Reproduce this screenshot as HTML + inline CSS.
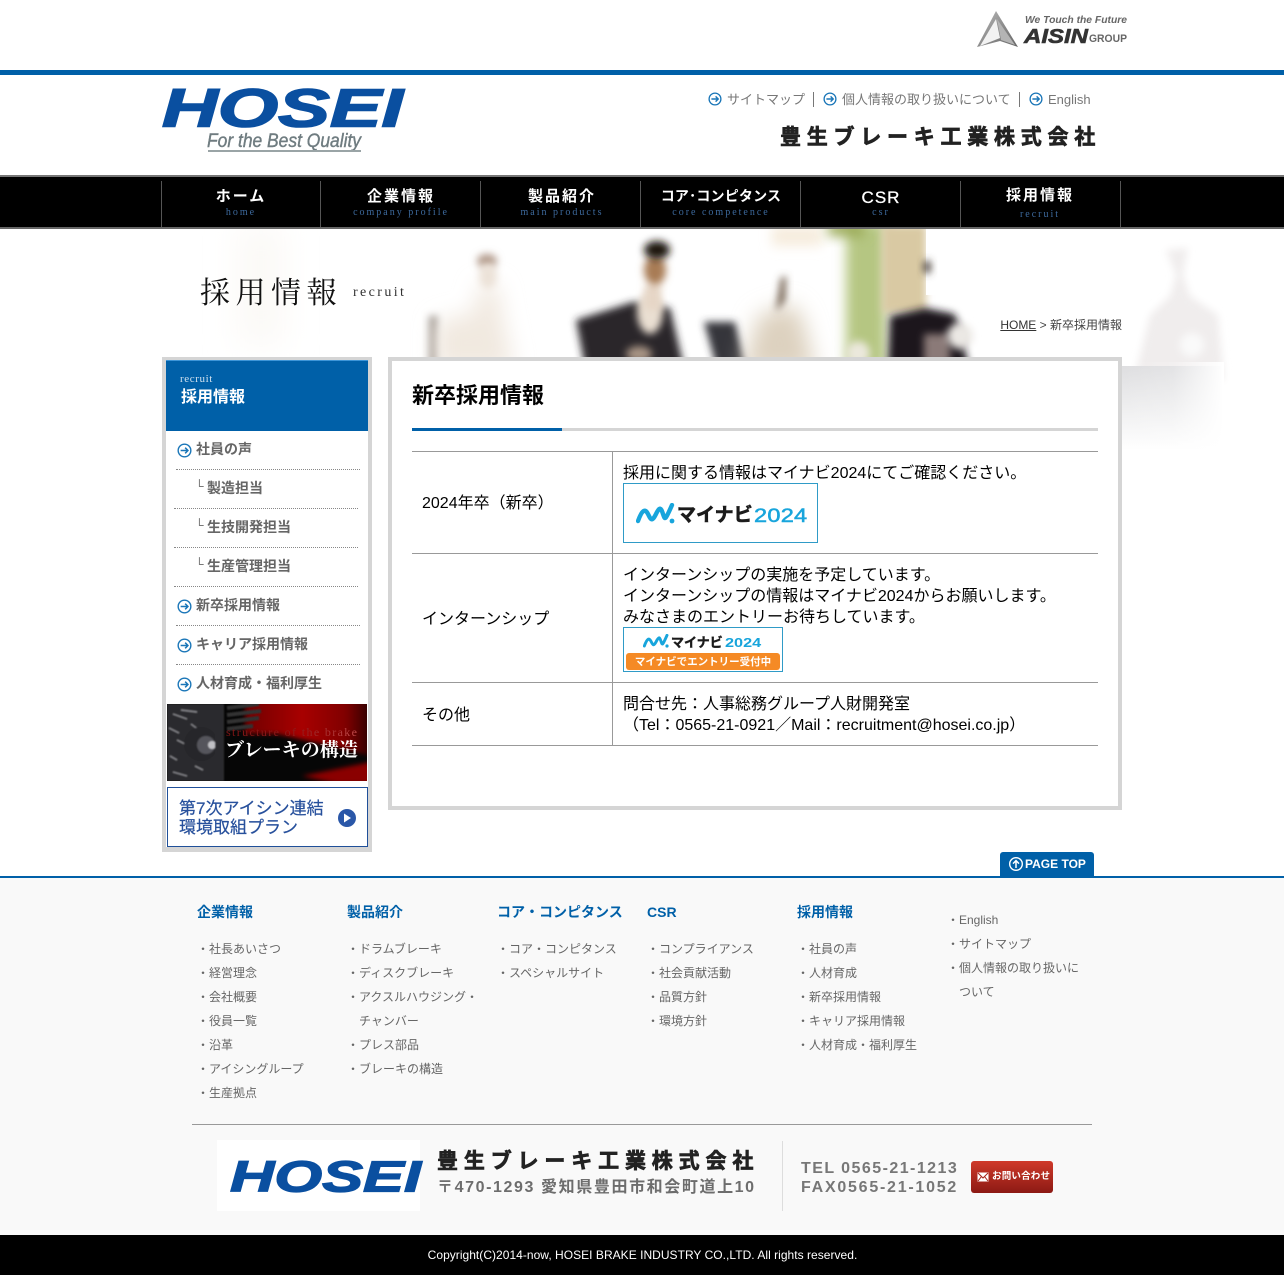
<!DOCTYPE html>
<html lang="ja"><head><meta charset="utf-8"><title>新卒採用情報</title>
<style>
html,body{margin:0;padding:0;background:#fff}
body{position:relative;width:1284px;height:1275px;overflow:hidden;font-family:"Liberation Sans","Noto Sans CJK JP",sans-serif;color:#000}
.a{position:absolute;white-space:nowrap}
svg{display:block}
.b{position:absolute}
.hl{font-size:13px;line-height:18px;color:#777}
.nm{font-size:15px;font-weight:bold;color:#fff;letter-spacing:2px;line-height:18px;text-align:center;width:160px;font-family:"Liberation Sans","Noto Sans CJK JP",sans-serif}
.ns{font-size:10px;color:#3d6a9e;letter-spacing:2px;line-height:12px;text-align:center;width:160px;font-family:"Liberation Serif",serif}
.sv{position:absolute;top:181px;width:1px;height:46px;background:#555}
.si{font-size:14px;font-weight:bold;color:#666;line-height:20px}
.dl{position:absolute;height:0;border-top:1px dotted #888}
.t{font-size:16px;line-height:21px;color:#000}
.fh{font-size:14px;font-weight:bold;color:#0060a8;line-height:18px}
.fi{font-size:12px;color:#666;line-height:24px}
.ln{position:absolute;background:#999}
</style></head><body>
<svg width="0" height="0" style="position:absolute"><defs>
<symbol id="ar" viewBox="0 0 14 14"><circle cx="7" cy="7" r="5.9" fill="#fff" stroke="#1a76b8" stroke-width="1.3"/><path d="M3.4 7H10.2M7.6 4.4 10.2 7 7.6 9.6" fill="none" stroke="#1a76b8" stroke-width="1.4"/></symbol>
<symbol id="zz" viewBox="0 0 39 21"><path d="M2 18C6 7 9 5 12 11S16 19 20 11 25 5 27 11 29 18 36 2" fill="none" stroke="#18a5dc" stroke-width="4.4" stroke-linecap="round" stroke-linejoin="round"/><circle cx="36" cy="18" r="2.4" fill="#18a5dc"/></symbol>
</defs></svg>

<!-- hero image -->
<svg class="b" style="left:0;top:229px" width="1284" height="235" viewBox="0 229 1284 235">
<defs>
<filter id="f2" x="-80%" y="-80%" width="260%" height="260%"><feGaussianBlur stdDeviation="4"/></filter>
<filter id="f3" x="-80%" y="-80%" width="260%" height="260%"><feGaussianBlur stdDeviation="6"/></filter>
<filter id="f6" x="-80%" y="-80%" width="260%" height="260%"><feGaussianBlur stdDeviation="11"/></filter>
<filter id="f14" x="-80%" y="-80%" width="260%" height="260%"><feGaussianBlur stdDeviation="16"/></filter>
<clipPath id="cl"><rect x="0" y="229" width="1284" height="128"/></clipPath>
<linearGradient id="shade" x1="0" y1="0" x2="0" y2="1"><stop offset="0" stop-color="#dedee0"/><stop offset="1" stop-color="#fff"/></linearGradient>
<linearGradient id="shadeH" x1="0" y1="0" x2="1" y2="0"><stop offset="0" stop-color="#fff" stop-opacity="0"/><stop offset="0.5" stop-color="#fff" stop-opacity=".15"/><stop offset="1" stop-color="#fff"/></linearGradient>
</defs>
<g clip-path="url(#cl)">
<rect x="0" y="229" width="1284" height="128" fill="#fff"/>
<rect x="238" y="225" width="46" height="120" fill="#fbf9f6" filter="url(#f14)"/>
<!-- P1 -->
<rect x="429" y="316" width="9" height="50" fill="#9c948e" filter="url(#f2)"/>
<path d="M436 322 475 312 478 285H498L502 312 514 370H436Z" fill="#f1e9e0" filter="url(#f6)"/>
<ellipse cx="487" cy="261" rx="10" ry="7" fill="#b09888" filter="url(#f2)"/>
<ellipse cx="488" cy="276" rx="9" ry="13" fill="#ece2d8" filter="url(#f2)"/>
<!-- P2 -->
<path d="M576 320 633 302 670 308 685 372H586Z" fill="#2b282c" filter="url(#f2)"/>
<ellipse cx="650" cy="312" rx="13" ry="22" fill="#eadfd2" filter="url(#f2)"/>
<rect x="645" y="284" width="16" height="26" fill="#e6d6c6" filter="url(#f2)"/>
<ellipse cx="655" cy="270" rx="11" ry="15" fill="#a87c55" filter="url(#f2)"/>
<ellipse cx="657" cy="250" rx="13" ry="9" fill="#1c130d" filter="url(#f2)"/>
<ellipse cx="639" cy="354" rx="13" ry="8" fill="#a89484" filter="url(#f2)"/>
<!-- P3 -->
<path d="M704 322H735L747 372H718Z" fill="#34353b" filter="url(#f2)"/>
<path d="M758 316 790 304 802 316 816 372H742Z" fill="#ddd1bf" filter="url(#f6)"/>
<rect x="772" y="226" width="50" height="20" fill="#f6ecdd" filter="url(#f3)"/>
<path d="M781 278 786 276 785 300 776 312Z" fill="#6a5644" filter="url(#f2)"/>
<!-- plant -->
<rect x="846" y="222" width="40" height="146" fill="#b5c682" filter="url(#f3)"/>
<rect x="828" y="222" width="36" height="14" fill="#98a852" filter="url(#f3)"/>
<rect x="882" y="225" width="44" height="88" fill="#d9c9a3" filter="url(#f2)"/>
<rect x="926" y="225" width="40" height="70" fill="#fff"/>
<ellipse cx="927" cy="267" rx="4" ry="7" fill="#4a4038" filter="url(#f2)"/>
<path d="M890 316 925 308 954 314 958 322 970 372H888Z" fill="#1b181e" filter="url(#f2)"/>
<rect x="924" y="334" width="26" height="30" fill="#8b7a78" filter="url(#f2)"/>
<circle cx="960" cy="336" r="13" fill="#ebe8e4" filter="url(#f2)"/>
<circle cx="858" cy="353" r="12" fill="#ebe8dc" filter="url(#f2)"/>
</g>
<!-- ghost right -->
<path d="M1166 250 1188 248 1183 275 1190 296 1218 315 1224 380H1134L1150 315 1170 296 1176 275Z" fill="#f0eded" filter="url(#f2)"/>
<circle cx="1192" cy="345" r="12" fill="#fafafa" filter="url(#f2)"/>
<rect x="1122" y="366" width="100" height="84" fill="url(#shade)"/>
<rect x="1122" y="362" width="102" height="92" fill="url(#shadeH)"/>
</svg>

<!-- top -->
<svg class="b" style="left:975px;top:8px" width="155" height="42" viewBox="975 8 155 42">
<defs><linearGradient id="tg" x1="0" y1="0" x2="1" y2="1"><stop offset="0" stop-color="#bbb"/><stop offset=".5" stop-color="#8e8e8e"/><stop offset="1" stop-color="#666"/></linearGradient></defs>
<path d="M977 47 996 11 1018 47 1000 41 Z" fill="url(#tg)"/><path d="M980 46 996 19 1000 38Z" fill="#f2f2f2"/><path d="M997 19 1015 45 1001 40Z" fill="#b4b4b4"/>
<text x="1025" y="23" font-family="Liberation Sans" font-size="10" font-weight="bold" font-style="italic" fill="#666" textLength="102" lengthAdjust="spacingAndGlyphs">We Touch the Future</text>
<text x="1024" y="43" font-family="Liberation Sans" font-size="20" font-weight="bold" font-style="italic" fill="#333" stroke="#333" stroke-width=".6" textLength="64" lengthAdjust="spacingAndGlyphs">AISIN</text>
<text x="1089" y="42" font-family="Liberation Sans" font-size="11" font-weight="bold" fill="#666" textLength="38" lengthAdjust="spacingAndGlyphs">GROUP</text>
</svg>
<div class="b" style="left:0;top:70px;width:1284px;height:5px;background:#0060a8"></div>

<!-- logo -->
<svg class="b" style="left:155px;top:80px" width="270" height="80" viewBox="155 80 270 80">
<text x="162" y="126.5" font-family="Liberation Sans" font-size="54" font-weight="bold" font-style="italic" fill="#0a4fa0" stroke="#0a4fa0" stroke-width="1.6" textLength="241" lengthAdjust="spacingAndGlyphs">HOSEI</text>
<text x="207" y="147" font-family="Liberation Sans" font-size="19" font-style="italic" fill="#6f7c80" stroke="#6f7c80" stroke-width=".4" textLength="154" lengthAdjust="spacingAndGlyphs">For the Best Quality</text>
<rect x="208" y="150" width="153" height="2" fill="#9aa4a6"/>
</svg>

<svg class="b" style="left:708px;top:92px" width="14" height="14"><use href="#ar"/></svg>
<div class="a hl" style="left:727px;top:91px">サイトマップ</div>
<div class="b" style="left:813px;top:92px;width:1px;height:15px;background:#777"></div>
<svg class="b" style="left:823px;top:92px" width="14" height="14"><use href="#ar"/></svg>
<div class="a hl" style="left:842px;top:91px">個人情報の取り扱いについて</div>
<div class="b" style="left:1019px;top:92px;width:1px;height:15px;background:#777"></div>
<svg class="b" style="left:1029px;top:92px" width="14" height="14"><use href="#ar"/></svg>
<div class="a hl" style="left:1048px;top:91px">English</div>
<div class="a" style="left:780px;top:122px;font-size:21px;line-height:28px;font-weight:bold;letter-spacing:5.75px;color:#222;-webkit-text-stroke:.7px #222;font-family:'Noto Sans CJK JP',sans-serif">豊生ブレーキ工業株式会社</div>

<!-- nav -->
<div class="b" style="left:0;top:175px;width:1284px;height:54px;background:#000;border-top:2px solid #777;border-bottom:2px solid #666;box-sizing:border-box"></div>
<div class="sv" style="left:161px"></div><div class="sv" style="left:320px"></div><div class="sv" style="left:480px"></div><div class="sv" style="left:640px"></div><div class="sv" style="left:800px"></div><div class="sv" style="left:960px"></div><div class="sv" style="left:1120px"></div>
<div class="a nm" style="left:161px;top:188px">ホーム</div><div class="a ns" style="left:161px;top:207px">home</div>
<div class="a nm" style="left:321px;top:188px">企業情報</div><div class="a ns" style="left:321px;top:207px">company profile</div>
<div class="a nm" style="left:482px;top:188px">製品紹介</div><div class="a ns" style="left:482px;top:207px">main products</div>
<div class="a nm" style="left:641px;top:187px;font-size:14px;letter-spacing:.2px">コア･コンピタンス</div><div class="a ns" style="left:641px;top:207px">core competence</div>
<div class="a nm" style="left:801px;top:189px;font-size:17px;letter-spacing:1px;font-weight:normal;-webkit-text-stroke:.3px #fff">CSR</div><div class="a ns" style="left:801px;top:207px">csr</div>
<div class="a nm" style="left:960px;top:187px">採用情報</div><div class="a ns" style="left:960px;top:209px">recruit</div>

<!-- page title -->
<div class="a" style="left:200px;top:269px;font-size:30px;line-height:42px;letter-spacing:5.5px;color:#111;font-family:'Noto Serif CJK SC','Liberation Serif',serif">採用情報</div>
<div class="a" style="left:353px;top:284px;font-size:14px;line-height:18px;letter-spacing:2.4px;color:#333;font-family:'Liberation Serif',serif">recruit</div>
<div class="a" style="right:162px;top:316px;font-size:12px;line-height:18px;color:#444"><span style="text-decoration:underline;color:#333">HOME</span> &gt; 新卒採用情報</div>

<!-- sidebar -->
<div class="b" style="left:162px;top:357px;width:210px;height:495px;background:#d5d5d5"></div>
<div class="b" style="left:166px;top:361px;width:202px;height:486px;background:#fff"></div>
<div class="b" style="left:166px;top:360px;width:202px;height:71px;background:#0060a8;box-shadow:inset 0 1px 0 #3d95d8"></div>
<div class="a" style="left:180px;top:373px;font-size:11px;line-height:13px;letter-spacing:.6px;color:#cfe0ee;font-family:'Liberation Serif',serif">recruit</div>
<div class="a" style="left:181px;top:388px;font-size:16px;line-height:20px;font-weight:bold;color:#fff">採用情報</div>

<svg class="b" style="left:177px;top:443px" width="15" height="15"><use href="#ar"/></svg>
<div class="a si" style="left:196px;top:439px">社員の声</div>
<div class="dl" style="left:176px;top:469px;width:184px"></div>
<div class="a" style="left:195px;top:477px;font-size:12px;line-height:18px;color:#666">└</div><div class="a si" style="left:207px;top:478px">製造担当</div>
<div class="dl" style="left:174px;top:508px;width:184px"></div>
<div class="a" style="left:195px;top:516px;font-size:12px;line-height:18px;color:#666">└</div><div class="a si" style="left:207px;top:517px">生技開発担当</div>
<div class="dl" style="left:174px;top:547px;width:184px"></div>
<div class="a" style="left:195px;top:555px;font-size:12px;line-height:18px;color:#666">└</div><div class="a si" style="left:207px;top:556px">生産管理担当</div>
<div class="dl" style="left:174px;top:586px;width:184px"></div>
<svg class="b" style="left:177px;top:599px" width="15" height="15"><use href="#ar"/></svg>
<div class="a si" style="left:196px;top:595px">新卒採用情報</div>
<div class="dl" style="left:176px;top:625px;width:184px"></div>
<svg class="b" style="left:177px;top:638px" width="15" height="15"><use href="#ar"/></svg>
<div class="a si" style="left:196px;top:634px">キャリア採用情報</div>
<div class="dl" style="left:176px;top:664px;width:184px"></div>
<svg class="b" style="left:177px;top:677px" width="15" height="15"><use href="#ar"/></svg>
<div class="a si" style="left:196px;top:673px">人材育成・福利厚生</div>

<!-- brake banner -->
<svg class="b" style="left:167px;top:704px" width="200" height="77" viewBox="0 0 200 77">
<defs><linearGradient id="rg" x1="0" y1="0" x2="1" y2="0"><stop offset="0" stop-color="#700000"/><stop offset=".45" stop-color="#a80000"/><stop offset=".8" stop-color="#800000"/><stop offset="1" stop-color="#2a0000"/></linearGradient>
<linearGradient id="tx" x1="0" y1="0" x2="1" y2="0"><stop offset="0" stop-color="#7e1414"/><stop offset=".55" stop-color="#8f1a1a"/><stop offset="1" stop-color="#c04a4a"/></linearGradient>
<filter id="bb"><feGaussianBlur stdDeviation=".8"/></filter><filter id="bs"><feGaussianBlur stdDeviation="2.5"/></filter></defs>
<rect width="200" height="77" fill="#060606"/>
<path d="M78 -4H204V52L165 42 110 30 78 30Z" fill="url(#rg)" filter="url(#bs)"/>
<path d="M135 72 204 58V80H170Z" fill="#8a0000" filter="url(#bs)"/>
<g filter="url(#bb)">
<path d="M0 0H48L52 77H0Z" fill="#2a2a2d"/>
<path d="M6 10 20 15M2 24 12 29M10 36 18 40M3 52 10 56M6 68 20 72M28 62 36 66M14 6 30 8M24 20 32 26" stroke="#85858a" stroke-width="1.4" fill="none"/>
<circle cx="34" cy="40" r="17" fill="#26262a"/><circle cx="39" cy="41" r="9" fill="#55555b"/><circle cx="45" cy="41" r="4" fill="#c0c0c4"/>
<rect x="48" y="0" width="9" height="77" fill="#2a2a2d"/>
<path d="M60 4 92 0M60 11 94 7M60 18 92 14M60 25 86 22" stroke="#303033" stroke-width="4" fill="none"/>
</g>
<text x="59" y="32" font-family="Liberation Serif" font-size="12" fill="url(#tx)" textLength="131" lengthAdjust="spacing">structure of the brake</text>
<text x="58" y="52" font-family="Noto Serif CJK SC,Liberation Serif,serif" font-size="19" font-weight="bold" fill="#fff" textLength="133" lengthAdjust="spacing">ブレーキの構造</text>
</svg>

<!-- env banner -->
<div class="b" style="left:167px;top:787px;width:199px;height:58px;border:1px solid #1f4f99;background:#fff"></div>
<div class="a" style="left:179px;top:799px;font-size:17px;line-height:19px;color:#27509c;-webkit-text-stroke:.2px #27509c">第7次アイシン連結<br>環境取組プラン</div>
<svg class="b" style="left:337px;top:808px" width="20" height="20" viewBox="0 0 20 20"><circle cx="10" cy="10" r="9" fill="#2a57a8"/><path d="M7 5.5 14 10 7 14.5Z" fill="#fff"/></svg>

<!-- main -->
<div class="b" style="left:388px;top:357px;width:734px;height:453px;box-sizing:border-box;border:4px solid #d5d5d5;background:#fff"></div>
<div class="a" style="left:412px;top:381px;font-size:22px;line-height:30px;font-weight:bold;color:#000">新卒採用情報</div>
<div class="b" style="left:412px;top:428px;width:686px;height:3px;background:#d5d5d5"></div>
<div class="b" style="left:412px;top:428px;width:150px;height:3px;background:#0060a8"></div>

<div class="ln" style="left:412px;top:451px;width:686px;height:1px"></div>
<div class="ln" style="left:412px;top:553px;width:686px;height:1px"></div>
<div class="ln" style="left:412px;top:682px;width:686px;height:1px"></div>
<div class="ln" style="left:412px;top:745px;width:686px;height:1px"></div>
<div class="ln" style="left:612px;top:451px;width:1px;height:295px"></div>

<div class="a t" style="left:422px;top:493px">2024年卒（新卒）</div>
<div class="a t" style="left:422px;top:609px">インターンシップ</div>
<div class="a t" style="left:422px;top:705px">その他</div>
<div class="a t" style="left:623px;top:463px">採用に関する情報はマイナビ2024にてご確認ください。</div>
<div class="a t" style="left:623px;top:565px">インターンシップの実施を予定しています。<br>インターンシップの情報はマイナビ2024からお願いします。<br>みなさまのエントリーお待ちしています。</div>
<div class="a t" style="left:623px;top:694px">問合せ先：人事総務グループ人財開発室<br>（Tel：0565-21-0921／Mail：recruitment@hosei.co.jp）</div>

<!-- mynavi big -->
<div class="b" style="left:623px;top:483px;width:193px;height:58px;border:1px solid #2f9bc7;background:#fff"></div>
<svg class="b" style="left:636px;top:503px" width="39" height="21"><use href="#zz"/></svg>
<div class="a" style="left:677px;top:500px;font-size:19px;line-height:28px;font-weight:bold;color:#1b1b1b;-webkit-text-stroke:.6px #1b1b1b;font-family:'Noto Sans CJK JP',sans-serif">マイナビ</div>
<div class="a" style="left:754px;top:505px;font-size:19px;line-height:24px;font-weight:normal;-webkit-text-stroke:.5px #18a5dc;color:#18a5dc;letter-spacing:.2px;transform-origin:0 50%;transform:scaleX(1.24)">2024</div>

<!-- mynavi small -->
<div class="b" style="left:623px;top:627px;width:158px;height:43px;border:1px solid #2f9bc7;background:#fff"></div>
<svg class="b" style="left:643px;top:634px" width="26" height="14" viewBox="0 0 39 21"><use href="#zz" width="39" height="21"/></svg>
<div class="a" style="left:671px;top:632px;font-size:13px;line-height:20px;font-weight:bold;color:#1b1b1b;-webkit-text-stroke:.4px #1b1b1b;font-family:'Noto Sans CJK JP',sans-serif">マイナビ</div>
<div class="a" style="left:725px;top:635px;font-size:13px;line-height:16px;font-weight:bold;color:#18a5dc;transform-origin:0 50%;transform:scaleX(1.25)">2024</div>
<div class="a" style="left:626px;top:653px;width:154px;height:17px;background:#f58a25;border-radius:3px;color:#fff;font-size:10.5px;line-height:17px;font-weight:bold;text-align:center;font-family:'Noto Sans CJK JP',sans-serif">マイナビでエントリー受付中</div>

<!-- page top -->
<div class="b" style="left:1000px;top:852px;width:94px;height:25px;background:#0060a8;border-radius:3px 3px 0 0"></div>
<svg class="b" style="left:1008px;top:856px" width="16" height="16" viewBox="0 0 16 16"><circle cx="8" cy="8" r="6.3" fill="none" stroke="#fff" stroke-width="1.4"/><path d="M8 12V4.8M5 7.6 8 4.6 11 7.6" fill="none" stroke="#fff" stroke-width="1.5"/></svg>
<div class="a" style="left:1025px;top:856px;font-size:12px;line-height:16px;font-weight:bold;color:#fff;letter-spacing:0">PAGE TOP</div>

<!-- footer -->
<div class="b" style="left:0;top:876px;width:1284px;height:359px;background:#f9f9f9;border-top:2px solid #0060a8;box-sizing:border-box"></div>

<div class="a fh" style="left:197px;top:903px">企業情報</div>
<div class="a fi" style="left:197px;top:937px">・社長あいさつ<br>・経営理念<br>・会社概要<br>・役員一覧<br>・沿革<br>・アイシングループ<br>・生産拠点</div>
<div class="a fh" style="left:347px;top:903px">製品紹介</div>
<div class="a fi" style="left:347px;top:937px">・ドラムブレーキ<br>・ディスクブレーキ<br>・アクスルハウジング・<br>　チャンバー<br>・プレス部品<br>・ブレーキの構造</div>
<div class="a fh" style="left:497px;top:903px">コア・コンピタンス</div>
<div class="a fi" style="left:497px;top:937px">・コア・コンピタンス<br>・スペシャルサイト</div>
<div class="a fh" style="left:647px;top:903px">CSR</div>
<div class="a fi" style="left:647px;top:937px">・コンプライアンス<br>・社会貢献活動<br>・品質方針<br>・環境方針</div>
<div class="a fh" style="left:797px;top:903px">採用情報</div>
<div class="a fi" style="left:797px;top:937px">・社員の声<br>・人材育成<br>・新卒採用情報<br>・キャリア採用情報<br>・人材育成・福利厚生</div>
<div class="a fi" style="left:947px;top:908px">・English<br>・サイトマップ<br>・個人情報の取り扱いに<br>　ついて</div>

<div class="b" style="left:192px;top:1124px;width:900px;height:1px;background:#999"></div>
<div class="b" style="left:217px;top:1140px;width:203px;height:71px;background:#fff"></div>
<svg class="b" style="left:225px;top:1150px" width="205" height="50" viewBox="225 1150 205 50">
<text x="230" y="1191.5" font-family="Liberation Sans" font-size="44" font-weight="bold" font-style="italic" fill="#0a4fa0" stroke="#0a4fa0" stroke-width="1.3" textLength="191" lengthAdjust="spacingAndGlyphs">HOSEI</text>
</svg>
<div class="a" style="left:437px;top:1146px;font-size:21px;line-height:28px;font-weight:bold;letter-spacing:5.85px;color:#222;-webkit-text-stroke:.7px #222;font-family:'Noto Sans CJK JP',sans-serif">豊生ブレーキ工業株式会社</div>
<div class="a" style="left:437px;top:1177px;font-size:16px;line-height:22px;font-weight:bold;color:#6d6d6d;letter-spacing:1.6px;font-family:'Liberation Sans','Noto Sans CJK JP',sans-serif">〒470-1293 愛知県豊田市和会町道上10</div>
<div class="b" style="left:782px;top:1141px;width:1px;height:70px;background:#ddd"></div>
<div class="a" style="left:801px;top:1159px;font-size:16px;line-height:20px;font-weight:bold;color:#777;letter-spacing:1.45px">TEL 0565-21-1213</div>
<div class="a" style="left:801px;top:1178px;font-size:16px;line-height:20px;font-weight:bold;color:#777;letter-spacing:1.75px">FAX0565-21-1052</div>
<div class="b" style="left:971px;top:1161px;width:82px;height:32px;border-radius:3px;background:linear-gradient(#cf3a2a,#8c1a14)"></div>
<svg class="b" style="left:977px;top:1172px" width="12" height="10" viewBox="0 0 12 10"><rect x=".5" y=".5" width="11" height="9" fill="#fff"/><path d="M1 1 6 6 11 1M1 9 4.5 4.5M11 9 7.5 4.5" fill="none" stroke="#a52218"/></svg>
<div class="a" style="left:992px;top:1170px;font-size:9.5px;line-height:14px;font-weight:bold;color:#fff;letter-spacing:.2px">お問い合わせ</div>

<div class="b" style="left:0;top:1235px;width:1284px;height:40px;background:#000"></div>
<div class="a" style="left:0;width:1285px;top:1246px;text-align:center;font-size:12px;line-height:18px;color:#fff;letter-spacing:.03px">Copyright(C)2014-now, HOSEI BRAKE INDUSTRY CO.,LTD. All rights reserved.</div>
</body></html>
